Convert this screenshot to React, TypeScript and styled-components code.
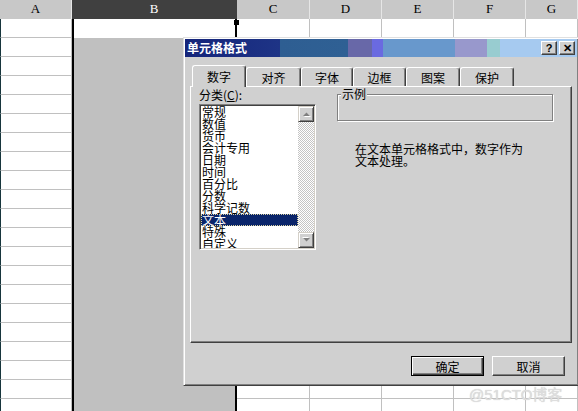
import styled, { createGlobalStyle } from "styled-components";

const GlobalStyle = createGlobalStyle`
  html, body {
    margin: 0;
    padding: 0;
    background: #fff;
  }
  body {
    font-family: "Noto Sans CJK SC", "Liberation Sans", sans-serif;
    font-size: 12px;
  }
`;

const columns = [
  { id: "A", width: 72 },
  { id: "B", width: 165, selected: true },
  { id: "C", width: 73 },
  { id: "D", width: 72 },
  { id: "E", width: 72 },
  { id: "F", width: 72 },
  { id: "G", width: 52 },
];

const ROW_COUNT = 21;

const tabs = [
  { label: "数字", width: 54 },
  { label: "对齐", width: 55 },
  { label: "字体", width: 52 },
  { label: "边框", width: 53 },
  { label: "图案", width: 54 },
  { label: "保护", width: 54 },
];

const categories = [
  "常规",
  "数值",
  "货币",
  "会计专用",
  "日期",
  "时间",
  "百分比",
  "分数",
  "科学记数",
  "文本",
  "特殊",
  "自定义",
];

const Screen = styled.div`
  position: relative;
  width: 578px;
  height: 411px;
  overflow: hidden;
  background: #fff;
`;

/* ---------- spreadsheet ---------- */

const Sheet = styled.div`
  display: flex;
  flex-direction: column;
`;

const HeaderRow = styled.div`
  display: flex;
  height: 19px;
`;

const ColumnHeader = styled.div<{ $width: number; $selected?: boolean }>`
  box-sizing: border-box;
  flex: none;
  width: ${({ $width }) => $width}px;
  display: flex;
  align-items: center;
  justify-content: center;
  padding-bottom: 1px;
  font-family: "Liberation Serif", serif;
  font-size: 13px;
  background: ${({ $selected }) => ($selected ? "#404040" : "#c8c8c8")};
  color: ${({ $selected }) => ($selected ? "#fff" : "#000")};
  border-right: 1px solid ${({ $selected }) => ($selected ? "#404040" : "#e6e6e6")};
`;

const Row = styled.div`
  display: flex;
  height: 19px;
`;

const Cell = styled.div<{ $width: number; $first?: boolean }>`
  box-sizing: border-box;
  flex: none;
  width: ${({ $width }) => $width}px;
  height: 19px;
  background: #fff;
  border-bottom: 1px solid #c0c0c0;
  border-right: 1px solid #c0c0c0;
  border-left: ${({ $first }) => ($first ? "1px solid #17353c" : "none")};
`;

const SelectedCell = styled.div<{ $width: number; $active?: boolean }>`
  position: relative;
  box-sizing: border-box;
  flex: none;
  width: ${({ $width }) => $width}px;
  height: 19px;
  background: ${({ $active }) => ($active ? "#fff" : "#c0c0c0")};
  border-left: 2px solid #000;
  border-right: 2px solid #000;
  z-index: 1;
`;

const FillHandle = styled.span`
  position: absolute;
  right: -4px;
  top: 1px;
  width: 5px;
  height: 5px;
  background: #000;
`;

/* ---------- dialog ---------- */

const Dialog = styled.div`
  position: absolute;
  left: 183px;
  top: 37px;
  width: 396px;
  height: 349px;
  box-sizing: border-box;
  padding: 1px;
  display: flex;
  flex-direction: column;
  background: #d0d0d0;
  border: 1px solid;
  border-color: #e0e0e0 #404040 #404040 #e0e0e0;
  box-shadow: inset 1px 1px 0 #fff, inset -1px -1px 0 #808080;
  z-index: 5;
`;

const TitleBar = styled.div`
  display: flex;
  align-items: center;
  justify-content: space-between;
  height: 18px;
  padding: 0 2px 0 2px;
  background: linear-gradient(
    to right,
    #14247a 0px,
    #1e3486 95px,
    #2e5e92 95px,
    #2f6094 163px,
    #6868a8 163px,
    #6868a8 187px,
    #6a6ae0 187px,
    #6a6ae0 198px,
    #6898cc 198px,
    #6898cc 270px,
    #9898cc 270px,
    #9898cc 302px,
    #98ccd0 302px,
    #98ccd0 315px,
    #a6caf0 315px
  );
`;

const TitleText = styled.span`
  color: #fff;
  font-weight: bold;
  font-size: 12px;
  line-height: 18px;
`;

const TitleButtons = styled.div`
  display: flex;
  gap: 2px;
`;

const TitleButton = styled.span`
  box-sizing: border-box;
  width: 16px;
  height: 14px;
  display: flex;
  align-items: center;
  justify-content: center;
  background: #d0d0d0;
  border: 1px solid;
  border-color: #fff #404040 #404040 #fff;
  box-shadow: inset -1px -1px 0 #808080;
  font-family: "Liberation Sans", sans-serif;
  font-weight: bold;
  font-size: 11px;
  line-height: 1;
  color: #000;
`;

const DialogBody = styled.div`
  display: flex;
  flex-direction: column;
  padding: 8px 5px 0;
`;

const TabRow = styled.div`
  position: relative;
  z-index: 2;
  display: flex;
  align-items: flex-start;
  height: 21px;
  padding-left: 2px;
`;

const Tab = styled.div<{ $width: number; $active?: boolean }>`
  box-sizing: border-box;
  flex: none;
  width: ${({ $width }) => $width}px;
  height: ${({ $active }) => ($active ? 22 : 19)}px;
  margin-top: ${({ $active }) => ($active ? 0 : 2)}px;
  display: flex;
  align-items: center;
  justify-content: center;
  padding-bottom: ${({ $active }) => ($active ? 1 : 0)}px;
  background: #d0d0d0;
  border-top: 1px solid #fff;
  border-left: 1px solid #fff;
  border-right: 1px solid #404040;
  box-shadow: inset -1px 0 0 #808080;
  border-radius: 3px 3px 0 0;
  font-size: 12px;
  color: #000;
`;

const Panel = styled.div`
  box-sizing: border-box;
  height: 257px;
  display: flex;
  gap: 21px;
  padding: 1px 8px 0;
  border: 1px solid;
  border-color: #fff #404040 #404040 #fff;
  box-shadow: inset -1px -1px 0 #808080;
`;

const LeftColumn = styled.div`
  display: flex;
  flex-direction: column;
  width: 117px;
`;

const FieldLabel = styled.div`
  height: 14px;
  line-height: 14px;
  font-size: 12px;
  color: #000;
  white-space: nowrap;
`;

const ListBox = styled.div`
  box-sizing: border-box;
  display: flex;
  width: 117px;
  height: 146px;
  margin-top: 2px;
  padding: 1px;
  overflow: hidden;
  background: #fff;
  border: 1px solid;
  border-color: #808080 #fff #fff #808080;
  box-shadow: inset 1px 1px 0 #404040, inset -1px -1px 0 #d4d0c8;
`;

const ListItems = styled.div`
  flex: 1;
  display: flex;
  flex-direction: column;
  overflow: hidden;
`;

const ListItem = styled.div<{ $selected?: boolean }>`
  flex: none;
  height: 12px;
  line-height: 12px;
  padding-left: 1px;
  font-size: 12px;
  white-space: nowrap;
  color: ${({ $selected }) => ($selected ? "#fff" : "#000")};
  background: ${({ $selected }) => ($selected ? "#0a246a" : "transparent")};
  outline: ${({ $selected }) => ($selected ? "1px dotted #d8d0a0" : "none")};
  outline-offset: -1px;
`;

const ScrollBar = styled.div`
  flex: none;
  width: 16px;
  display: flex;
  flex-direction: column;
  justify-content: space-between;
  background: repeating-conic-gradient(#fff 0% 25%, #c4c4c4 0% 50%) 0 0 / 2px 2px;
`;

const ScrollButton = styled.div`
  box-sizing: border-box;
  width: 16px;
  height: 16px;
  display: flex;
  align-items: center;
  justify-content: center;
  background: #d0d0d0;
  border: 1px solid;
  border-color: #d4d0c8 #404040 #404040 #d4d0c8;
  box-shadow: inset 1px 1px 0 #fff, inset -1px -1px 0 #808080;
`;

const RightColumn = styled.div`
  flex: 1;
  display: flex;
  flex-direction: column;
`;

const GroupBox = styled.div`
  position: relative;
  box-sizing: border-box;
  width: 216px;
  height: 27px;
  margin-top: 6px;
  border: 1px solid #808080;
  box-shadow: 1px 1px 0 #fff, inset 1px 1px 0 #fff;
`;

const GroupLabel = styled.span`
  position: absolute;
  top: -8px;
  left: 3px;
  padding: 0 1px;
  line-height: 14px;
  font-size: 12px;
  background: #d0d0d0;
  color: #000;
`;

const Description = styled.p`
  width: 170px;
  margin: 22px 0 0 18px;
  font-size: 12px;
  line-height: 12px;
  color: #000;
`;

const Footer = styled.div`
  display: flex;
  justify-content: flex-end;
  gap: 8px;
  margin-top: 13px;
  padding-right: 7px;
`;

const PushButton = styled.button<{ $default?: boolean }>`
  box-sizing: border-box;
  width: 73px;
  height: 20px;
  padding: 0;
  font-family: "Noto Sans CJK SC", sans-serif;
  font-size: 12px;
  color: #000;
  background: #d0d0d0;
  border: 1px solid;
  border-color: ${({ $default }) => ($default ? "#000" : "#fff #404040 #404040 #fff")};
  box-shadow: ${({ $default }) =>
    $default
      ? "inset 1px 1px 0 #fff, inset -1px -1px 0 #404040, inset -2px -2px 0 #808080"
      : "inset -1px -1px 0 #808080"};
`;

const Watermark = styled.span`
  position: absolute;
  left: 469px;
  top: 383px;
  z-index: 6;
  font-family: "Liberation Sans", "Noto Sans CJK SC", sans-serif;
  font-size: 15px;
  color: #dedede;
  text-shadow: 0 0 1px #c8c8c8;
  white-space: nowrap;
`;

const Arrow = ({ down }: { down?: boolean }) => (
  <svg width="9" height="6" viewBox="0 0 9 6">
    <g transform={down ? "rotate(180 4.5 3)" : undefined}>
      <path d="M1 5 L4.5 1.5 L8 5 Z" fill="#fff" transform="translate(1 1)" />
      <path d="M1 5 L4.5 1.5 L8 5 Z" fill="#808080" />
    </g>
  </svg>
);

export default function App() {
  return (
    <Screen>
      <GlobalStyle />
      <Sheet>
        <HeaderRow>
          {columns.map((c) => (
            <ColumnHeader key={c.id} $width={c.width} $selected={c.selected}>
              {c.id}
            </ColumnHeader>
          ))}
        </HeaderRow>
        {Array.from({ length: ROW_COUNT }).map((_, r) => (
          <Row key={r}>
            {columns.map((c, i) =>
              c.selected ? (
                <SelectedCell key={c.id} $width={c.width} $active={r === 0}>
                  {r === 0 && <FillHandle />}
                </SelectedCell>
              ) : (
                <Cell key={c.id} $width={c.width} $first={i === 0} />
              )
            )}
          </Row>
        ))}
      </Sheet>

      <Dialog>
        <TitleBar>
          <TitleText>单元格格式</TitleText>
          <TitleButtons>
            <TitleButton>?</TitleButton>
            <TitleButton>✕</TitleButton>
          </TitleButtons>
        </TitleBar>
        <DialogBody>
          <TabRow>
            {tabs.map((t, i) => (
              <Tab key={t.label} $width={t.width} $active={i === 0}>
                {t.label}
              </Tab>
            ))}
          </TabRow>
          <Panel>
            <LeftColumn>
              <FieldLabel>
                分类(<u>C</u>):
              </FieldLabel>
              <ListBox>
                <ListItems>
                  {categories.map((c) => (
                    <ListItem key={c} $selected={c === "文本"}>
                      {c}
                    </ListItem>
                  ))}
                </ListItems>
                <ScrollBar>
                  <ScrollButton>
                    <Arrow />
                  </ScrollButton>
                  <ScrollButton>
                    <Arrow down />
                  </ScrollButton>
                </ScrollBar>
              </ListBox>
            </LeftColumn>
            <RightColumn>
              <GroupBox>
                <GroupLabel>示例</GroupLabel>
              </GroupBox>
              <Description>在文本单元格格式中，数字作为文本处理。</Description>
            </RightColumn>
          </Panel>
          <Footer>
            <PushButton $default>确定</PushButton>
            <PushButton>取消</PushButton>
          </Footer>
        </DialogBody>
      </Dialog>
      <Watermark>@51CTO博客</Watermark>
    </Screen>
  );
}
